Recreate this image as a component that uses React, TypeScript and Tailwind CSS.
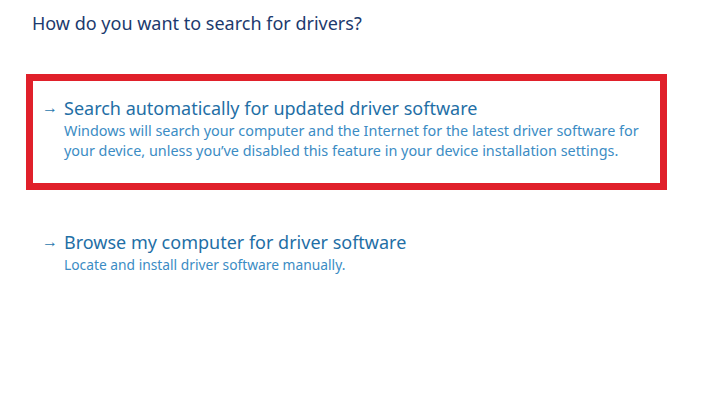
export default function App() {
  return (
    <div className="w-[713px] h-[418px] bg-white overflow-hidden font-['Noto_Sans',sans-serif]">
      <div className="pt-[9px] pl-[26px]">
        <h1 className="ml-[6px] text-[18px] leading-[28px] text-[#1c3a6e] font-normal">
          How do you want to search for drivers?
        </h1>
        <div className="mt-[37px] w-[641px] h-[116px] border-[7px] border-[#e0202a] pl-[9px] pt-[14px]">
          <Option
            title="Search automatically for updated driver software"
            size="text-[14.4px]"
            lines={[
              'Windows will search your computer and the Internet for the latest driver software for',
              'your device, unless you\u2019ve disabled this feature in your device installation settings.',
            ]}
          />
        </div>
        <div className="mt-[39px] pl-[16px]">
          <Option
            title="Browse my computer for driver software"
            size="text-[13.8px]"
            lines={['Locate and install driver software manually.']}
          />
        </div>
      </div>
    </div>
  )
}

function Option({ title, lines, size }: { title: string; lines: string[]; size: string }) {
  return (
    <div className="flex">
      <span className="w-[22px] text-[16px] leading-[24px] text-[#2a77ad]">→</span>
      <div>
        <div className="text-[18px] leading-[26px] text-[#1f6fa6]">{title}</div>
        <div className={`${size} leading-[20px] text-[#3b8cc4]`}>
          {lines.map((l) => (
            <div key={l}>{l}</div>
          ))}
        </div>
      </div>
    </div>
  )
}
